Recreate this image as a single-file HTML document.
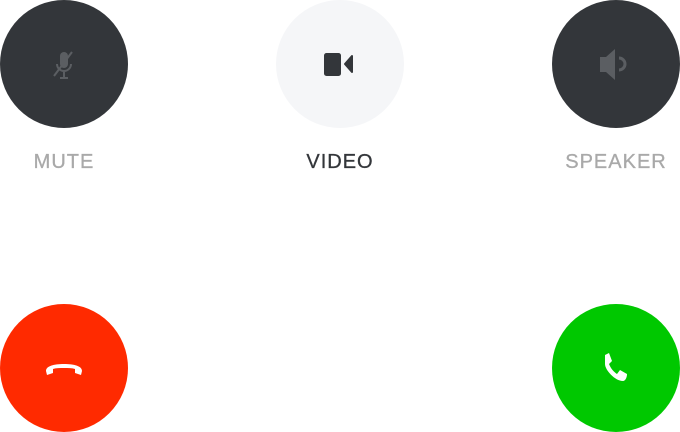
<!DOCTYPE html>
<html><head><style>
body{margin:0;width:680px;height:432px;background:#fff;position:relative;overflow:hidden;font-family:"Liberation Sans",sans-serif}
.c{position:absolute;width:128px;height:128px;border-radius:50%}
.l{position:absolute;top:151px;width:160px;text-align:center;font-size:20px;letter-spacing:1px;-webkit-text-stroke:0.3px currentColor}
svg{position:absolute}
</style></head><body>
<div class="c" style="left:0;top:0;background:#33363a"></div>
<div class="c" style="left:276px;top:0;background:#f5f6f8"></div>
<div class="c" style="left:552px;top:0;background:#33363a"></div>
<div class="c" style="left:0;top:304px;background:#ff2a00"></div>
<div class="c" style="left:552px;top:304px;background:#00c800"></div>
<div class="l" style="left:-16px;color:#a9a9a9">MUTE</div>
<div class="l" style="left:260px;color:#33363a">VIDEO</div>
<div class="l" style="left:536px;color:#a9a9a9">SPEAKER</div>
<svg style="left:48px;top:48px" width="32" height="36" viewBox="0 0 32 36">
<g fill="none" stroke="#5b5e62" stroke-width="2">
<rect x="12" y="4" width="8" height="16" rx="4" fill="#5b5e62" stroke="none"/>
<path d="M9 16a7 7 0 0 0 14 0M16 23v6M12 30h8"/>
<path d="M6 28L24 4" stroke-width="2"/>
</g></svg>
<svg style="left:320px;top:50px" width="40" height="28" viewBox="0 0 40 28">
<rect x="4" y="3" width="17" height="23" rx="2.5" fill="#33363a"/>
<path d="M25 14L32 6V22Z" fill="#33363a" stroke="#33363a" stroke-width="2" stroke-linejoin="round"/>
</svg>
<svg style="left:596px;top:46px" width="40" height="36" viewBox="0 0 40 36">
<path d="M4 11H10L19 3V34L10 26H4Z" fill="#5b5e62"/>
<path d="M23 12a6 6 0 0 1 0 12" fill="none" stroke="#5b5e62" stroke-width="3"/>
</svg>
<svg style="left:44px;top:356px" width="42" height="24" viewBox="0 0 42 24">
<path d="M3 19L2 15C2 10 10 8 20 8S38 10 38 15L37 19L31 17V13C28 12 24 12 20 12S12 12 9 13V17Z" fill="#fff"/>
</svg>
<svg style="left:598px;top:350px" width="36" height="36" viewBox="0 0 36 36">
<path d="M7 5L11 3L14 11L11 14C13 19 16 22 19 24L22 20L29 24C29 28 27 31 25 31C17 31 7 20 7 14Z" fill="#fff"/>
</svg>
</body></html>
